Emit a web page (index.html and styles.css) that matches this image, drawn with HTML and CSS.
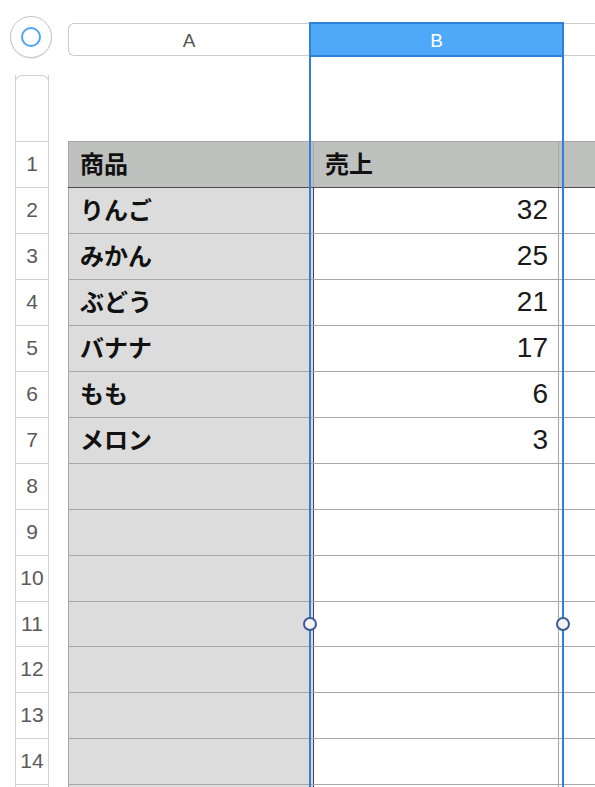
FILE: index.html
```html
<!DOCTYPE html>
<html lang="ja">
<head>
<meta charset="utf-8">
<link rel="stylesheet" href="styles.css">
</head>
<body>
<div class="sheet">
  <div class="top">
    <div class="corner">
      <div class="corner-btn"><span class="ring"></span></div>
    </div>
    <div class="colheads">
      <div class="ch ch-a">A</div>
      <div class="ch ch-b">B</div>
      <div class="ch ch-c"></div>
    </div>
  </div>
  <div class="main">
    <div class="rowheads">
      <div class="rh rh-top"></div>
      <div class="rh">1</div>
      <div class="rh">2</div>
      <div class="rh">3</div>
      <div class="rh">4</div>
      <div class="rh">5</div>
      <div class="rh">6</div>
      <div class="rh">7</div>
      <div class="rh">8</div>
      <div class="rh">9</div>
      <div class="rh">10</div>
      <div class="rh rh-short">11</div>
      <div class="rh">12</div>
      <div class="rh">13</div>
      <div class="rh">14</div>
      <div class="rh"></div>
    </div>
    <div class="tablewrap">
      <div class="table">
        <div class="row head"><div class="c a">商品</div><div class="c b">売上</div><div class="c c3"></div></div>
        <div class="row"><div class="c a">りんご</div><div class="c b num">32</div><div class="c c3"></div></div>
        <div class="row"><div class="c a">みかん</div><div class="c b num">25</div><div class="c c3"></div></div>
        <div class="row"><div class="c a">ぶどう</div><div class="c b num">21</div><div class="c c3"></div></div>
        <div class="row"><div class="c a">バナナ</div><div class="c b num">17</div><div class="c c3"></div></div>
        <div class="row"><div class="c a">もも</div><div class="c b num">6</div><div class="c c3"></div></div>
        <div class="row"><div class="c a">メロン</div><div class="c b num">3</div><div class="c c3"></div></div>
        <div class="row"><div class="c a"></div><div class="c b"></div><div class="c c3"></div></div>
        <div class="row"><div class="c a"></div><div class="c b"></div><div class="c c3"></div></div>
        <div class="row"><div class="c a"></div><div class="c b"></div><div class="c c3"></div></div>
        <div class="row short"><div class="c a"></div><div class="c b"></div><div class="c c3"></div></div>
        <div class="row"><div class="c a"></div><div class="c b"></div><div class="c c3"></div></div>
        <div class="row"><div class="c a"></div><div class="c b"></div><div class="c c3"></div></div>
        <div class="row"><div class="c a"></div><div class="c b"></div><div class="c c3"></div></div>
        <div class="row"><div class="c a"></div><div class="c b"></div><div class="c c3"></div></div>
      </div>
    </div>
  </div>
  <div class="selection">
    <span class="handle handle-left"></span>
    <span class="handle handle-right"></span>
  </div>
</div>
</body>
</html>
```
FILE: styles.css
```css
html, body {
  margin: 0;
  padding: 0;
  background: #ffffff;
}
body {
  width: 595px;
  height: 787px;
  overflow: hidden;
  font-family: "Liberation Sans", "Noto Sans CJK JP", sans-serif;
}
.sheet {
  position: relative;
  width: 595px;
  height: 787px;
  overflow: hidden;
}
.top {
  display: flex;
  height: 75px;
}
.corner {
  width: 68px;
  flex: none;
}
.corner-btn {
  box-sizing: border-box;
  width: 42px;
  height: 42px;
  margin: 16px 0 0 10px;
  border: 1px solid #c4c4c4;
  border-radius: 50%;
  display: flex;
  align-items: center;
  justify-content: center;
  background: #fff;
  box-shadow: 0 1px 1px rgba(0, 0, 0, 0.08);
}
.ring {
  box-sizing: border-box;
  width: 20px;
  height: 20px;
  border: 2px solid #4ba5f6;
  border-radius: 50%;
}
.colheads {
  flex: 1;
  box-sizing: border-box;
  display: flex;
  margin-top: 23px;
  height: 33px;
  border: 1px solid #cbcbcb;
  border-right: none;
  border-radius: 6px 0 0 6px;
}
.ch {
  display: flex;
  align-items: center;
  justify-content: center;
  padding-top: 2px;
  font-size: 19px;
  color: #555555;
}
.ch-a {
  width: 240px;
  flex: none;
}
.ch-b {
  width: 255px;
  flex: none;
  box-sizing: border-box;
  margin: -2px 0 -2px;
  border-top: 2px solid #2f80d8;
  border-bottom: 2px solid #2f80d8;
  background: #4fa9f8;
  color: #ffffff;
}
.ch-c {
  flex: 1;
}
.main {
  display: flex;
}
.rowheads {
  width: 34px;
  flex: none;
  margin-left: 15px;
  box-sizing: border-box;
  border-left: 1px solid #d2d2d2;
  border-right: 1px solid #d2d2d2;
}
.rh {
  box-sizing: border-box;
  height: 46px;
  border-top: 1px solid #d2d2d2;
  display: flex;
  align-items: center;
  justify-content: center;
  padding-bottom: 1px;
  font-size: 21px;
  color: #5a5a5a;
}
.rh-top {
  height: 66px;
  border-radius: 7px 7px 0 0;
  margin: 0 -1px;
  border: 1px solid #d2d2d2;
  border-bottom: none;
}
.rh-short {
  height: 45px;
}
.tablewrap {
  flex: 1;
  margin-left: 19px;
  padding-top: 66px;
}
.table {
  border-top: 1px solid #a7a7a7;
}
.row {
  display: flex;
  box-sizing: border-box;
  height: 46px;
  border-bottom: 1px solid #a7a7a7;
}
.row.short {
  height: 45px;
}
.row.head {
  border-bottom-color: #4d4d4d;
  background: #bfc1bf;
}
.c {
  box-sizing: border-box;
  display: flex;
  align-items: center;
  padding-bottom: 4px;
  font-family: "Noto Sans CJK JP", sans-serif;
  font-weight: 700;
  font-size: 24px;
  color: #111111;
}
.a {
  width: 246px;
  flex: none;
  padding-left: 11px;
  background: #dcdcdc;
  border-left: 1px solid #a7a7a7;
  border-right: 1px solid #444444;
}
.b {
  width: 245px;
  flex: none;
  padding-left: 11px;
  border-right: 1px solid #a7a7a7;
}
.c3 {
  flex: 1;
}
.head .a {
  background: #bfc1bf;
  border-right-color: #a7a7a7;
}
.num {
  justify-content: flex-end;
  padding-right: 10px;
  padding-bottom: 2px;
  font-family: "Liberation Sans", sans-serif;
  font-weight: 400;
  font-size: 28px;
  color: #1a1a1a;
}
.selection {
  position: absolute;
  left: 309px;
  top: 22px;
  bottom: 0;
  width: 255px;
  box-sizing: border-box;
  border-left: 2px solid #2f80d8;
  border-right: 2px solid #2f80d8;
  pointer-events: none;
}
.handle {
  position: absolute;
  top: 595px;
  width: 14px;
  height: 14px;
  box-sizing: border-box;
  border: 2px solid #3b5a96;
  border-radius: 50%;
  background: #f2f2f2;
}
.handle-left {
  left: -8px;
}
.handle-right {
  right: -8px;
}
```
